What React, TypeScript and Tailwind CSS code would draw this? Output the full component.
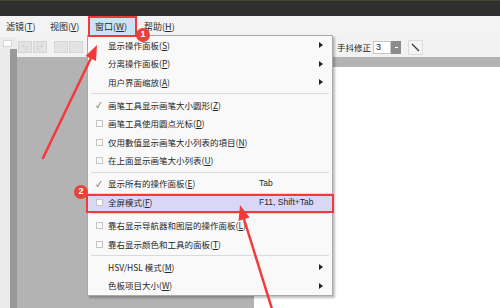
import { Undo2, Redo2 } from "lucide-react";

type Row =
  | { kind: "sep" }
  | {
      kind: "item";
      label: string;
      k: string;
      check?: "on" | "off";
      sub?: boolean;
      shortcut?: string;
      active?: boolean;
    };

const rows: Row[] = [
  { kind: "item", label: "显示操作面板", k: "S", sub: true },
  { kind: "item", label: "分离操作面板", k: "P", sub: true },
  { kind: "item", label: "用户界面缩放", k: "A", sub: true },
  { kind: "sep" },
  { kind: "item", label: "画笔工具显示画笔大小圆形", k: "Z", check: "on" },
  { kind: "item", label: "画笔工具使用圆点光标", k: "D", check: "off" },
  { kind: "item", label: "仅用數值显示画笔大小列表的項目", k: "N", check: "off" },
  { kind: "item", label: "在上面显示画笔大小列表", k: "U", check: "off" },
  { kind: "sep" },
  { kind: "item", label: "显示所有的操作面板", k: "E", check: "on", shortcut: "Tab" },
  { kind: "item", label: "全屏模式", k: "F", check: "off", shortcut: "F11, Shift+Tab", active: true },
  { kind: "sep" },
  { kind: "item", label: "靠右显示导航器和图层的操作面板", k: "L", check: "off" },
  { kind: "item", label: "靠右显示颜色和工具的面板", k: "T", check: "off" },
  { kind: "sep" },
  { kind: "item", label: "HSV/HSL 模式", k: "M", sub: true },
  { kind: "item", label: "色板项目大小", k: "W", sub: true },
];

function Mnemonic({ label, k }: { label: string; k: string }) {
  return (
    <span>
      {label}(<span className="underline underline-offset-1">{k}</span>)
    </span>
  );
}

function MenuRow({ row }: { row: Row }) {
  if (row.kind === "sep") {
    return (
      <div className="h-[5px] flex items-center px-[3px]">
        <div className="h-px w-full bg-[#dadada]" />
      </div>
    );
  }
  return (
    <div
      className={`h-[18.5px] flex items-center pl-[8px] pr-[9px] ${
        row.active ? "bg-[#d8d8f6]" : ""
      }`}
    >
      <div className="w-[12px] flex items-center">
        {row.check === "on" && (
          <span className="text-[8px] leading-none text-[#555]">✓</span>
        )}
        {row.check === "off" && (
          <span className="w-[7px] h-[7px] border border-[#c4c4c4] bg-[#fbfbfb]" />
        )}
      </div>
      <div className="w-[151px] whitespace-nowrap text-[#262626]">
        <Mnemonic label={row.label} k={row.k} />
      </div>
      <div className="flex-1 whitespace-nowrap text-[#262626] font-['Liberation_Sans',sans-serif] text-[8.5px]">
        {row.shortcut}
      </div>
      {row.sub && (
        <svg width="4" height="6" viewBox="0 0 4 6">
          <path d="M0 0 L4 3 L0 6 Z" fill="#222" />
        </svg>
      )}
    </div>
  );
}

function ToolBtn({ children }: { children?: React.ReactNode }) {
  return (
    <div className="w-[14px] h-[12px] bg-[#e3e3e3] border border-[#d6d6d6] flex items-center justify-center text-[#cacaca]">
      {children}
    </div>
  );
}

export default function App() {
  return (
    <div className="relative w-[500px] h-[308px] overflow-hidden flex flex-col bg-white font-['Noto_Sans_CJK_SC',sans-serif] text-[9px]">
      {/* title bar */}
      <div className="h-[16px] bg-[#2f2f2f] border-t border-[#3e4a35]" />

      {/* menubar */}
      <div className="h-[21px] bg-[#f3f3f3] flex items-center pl-[1px] text-[#2a2a2a]">
        <div className="w-[44px] pl-[5px]">
          <Mnemonic label="滤镜" k="T" />
        </div>
        <div className="w-[44px] pl-[5px]">
          <Mnemonic label="视图" k="V" />
        </div>
        <div className="ml-[1px] w-[46px] h-[17px] pl-[5px] flex items-center bg-[#cce2f6]">
          <Mnemonic label="窗口" k="W" />
        </div>
        <div className="ml-[3px] pl-[5px]">
          <Mnemonic label="帮助" k="H" />
        </div>
      </div>

      {/* main */}
      <div className="flex-1 flex">
        <div className="w-[17px] flex flex-col">
          <div className="h-[12px] bg-[#ececec] flex items-center pl-[3px]">
            <div className="w-[9px] h-[7px] bg-white border border-[#d4d4d4]" />
          </div>
          <div className="flex-1 flex">
            <div className="w-[10px] bg-[#ebebeb]" />
            <div className="w-[7px] bg-[#999999]" />
          </div>
        </div>

        <div className="flex-1 flex flex-col">
          {/* toolbar */}
          <div className="h-[20px] bg-[#f2f2f2] flex items-center">
            <div className="w-[320px] flex items-center gap-[1px] pl-[1px]">
              <ToolBtn>
                <Undo2 size={8} />
              </ToolBtn>
              <ToolBtn>
                <Redo2 size={8} />
              </ToolBtn>
              <div className="w-[5px]" />
              <ToolBtn />
              <ToolBtn />
            </div>
            <span className="text-[8.5px] text-[#222] whitespace-nowrap">手抖修正</span>
            <div className="ml-[2px] flex items-center h-[13px]">
              <div className="w-[18px] h-[13px] bg-white border border-[#c8c8c8] text-[9px] leading-[11px] pl-[2px] font-['Liberation_Sans',sans-serif] text-[#222]">
                3
              </div>
              <div className="w-[10px] h-[13px] bg-[#8c8c8c] flex items-center justify-center">
                <div className="w-[3px] h-px bg-white" />
              </div>
            </div>
            <div className="ml-[7px] w-[15px] h-[15px] border border-[#dcdcdc] bg-[#f5f5f5] flex items-center justify-center">
              <svg width="9" height="9" viewBox="0 0 9 9">
                <path d="M1 1 L8 8" stroke="#333" strokeWidth="1.2" />
              </svg>
            </div>
          </div>
          <div className="h-[10px] bg-[#b3b3b3]" />
          <div className="flex-1 flex">
            <div className="w-[237px] bg-[#b3b3b3]" />
            <div className="flex-1 bg-white" />
          </div>
        </div>
      </div>

      {/* dropdown menu */}
      <div className="absolute left-[87px] top-[35px] w-[246px] h-[261px] bg-[#f9f9f9] border border-[#a9a9a9] shadow-[2px_2px_2px_rgba(0,0,0,0.25)] text-[8.5px] flex flex-col">
        {rows.map((r, i) => (
          <MenuRow key={i} row={r} />
        ))}
      </div>

      {/* annotations */}
      <div className="absolute left-[88px] top-[16px] w-[49px] h-[21px] border-2 border-[#ee3a3a]" />
      <div className="absolute left-[86px] top-[194px] w-[248px] h-[19px] border-2 border-[#ee3a3a]" />
      <div className="absolute left-[136px] top-[28px] w-[14px] h-[14px] rounded-full bg-[#e8433a] text-white text-[9px] font-bold font-['Liberation_Sans',sans-serif] flex items-center justify-center">
        1
      </div>
      <div className="absolute left-[74px] top-[185px] w-[14px] h-[14px] rounded-full bg-[#e8433a] text-white text-[9px] font-bold font-['Liberation_Sans',sans-serif] flex items-center justify-center">
        2
      </div>
      <svg className="absolute left-0 top-0 pointer-events-none" width="500" height="308" viewBox="0 0 500 308">
        <path d="M43 158 L91 58" stroke="#f23a3a" strokeWidth="2.5" strokeLinecap="round" />
        <polygon points="97,45 96,61 85.5,56" fill="#f23a3a" />
        <path d="M272 309 L244 219" stroke="#f23a3a" strokeWidth="2.5" />
        <polygon points="240,205 249.5,217.5 238.5,221" fill="#f23a3a" />
      </svg>
    </div>
  );
}
